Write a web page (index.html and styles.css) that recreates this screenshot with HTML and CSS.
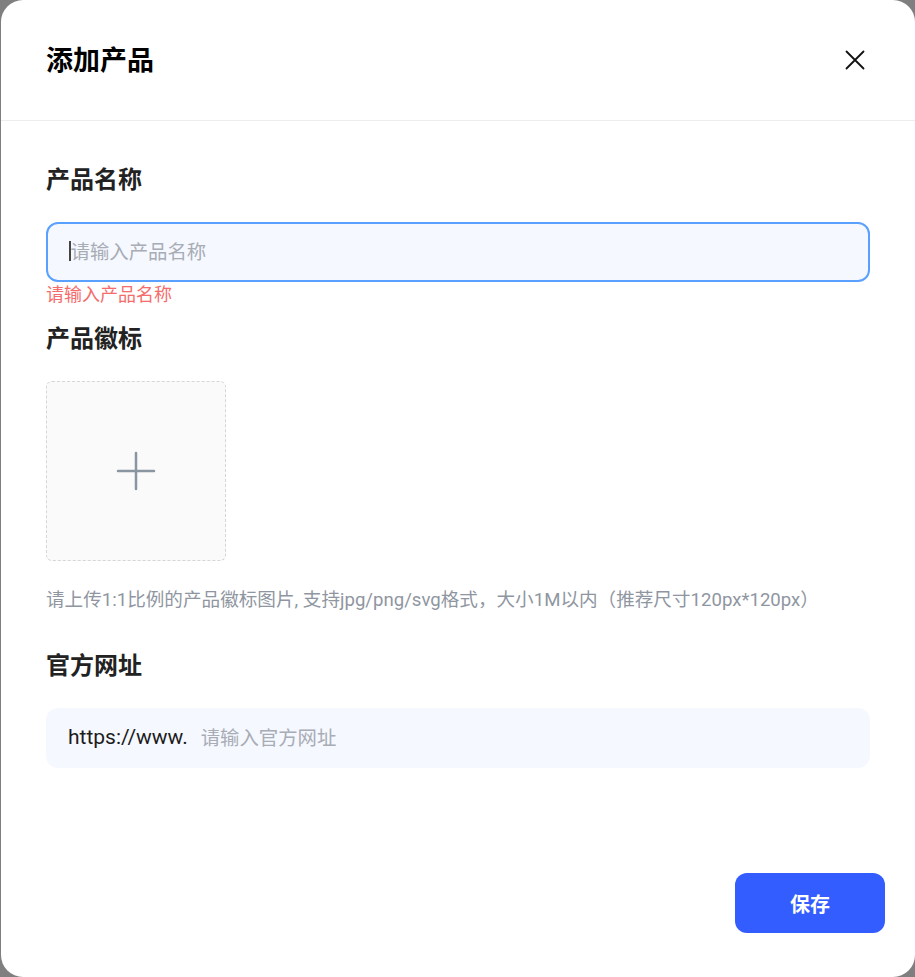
FILE: index.html
```html
<!DOCTYPE html>
<html lang="zh">
<head>
<meta charset="utf-8">
<link rel="stylesheet" href="styles.css">
</head>
<body>
<div class="dialog">
  <div class="header">
    <h1 class="title">添加产品</h1>
    <svg class="close" width="20" height="20" viewBox="0 0 20 20"><path d="M1.5 1.5L18.5 18.5M18.5 1.5L1.5 18.5" stroke="#111" stroke-width="1.8" fill="none" stroke-linecap="round"/></svg>
  </div>
  <div class="content">
    <div class="label first">产品名称</div>
    <div class="field field-focus"><span class="caret"></span><span class="ph">请输入产品名称</span></div>
    <div class="error">请输入产品名称</div>
    <div class="label second">产品徽标</div>
    <div class="upload">
      <svg width="40" height="40" viewBox="0 0 40 40"><path d="M20 2V38M2 20H38" stroke="#8a95a2" stroke-width="2.5" stroke-linecap="round" fill="none"/></svg>
    </div>
    <div class="hint">请上传1:1比例的产品徽标图片, 支持jpg/png/svg格式，大小1M以内（推荐尺寸120px*120px）</div>
    <div class="label third">官方网址</div>
    <div class="field"><span class="prefix">https://www.</span><span class="ph">请输入官方网址</span></div>
  </div>
  <div class="footer">
    <button class="save">保存</button>
  </div>
</div>
</body>
</html>
```
FILE: styles.css
```css
html, body {
  margin: 0;
  padding: 0;
}
body {
  background: #7f7f7f;
  padding-left: 1px;
  font-family: Roboto, "Noto Sans CJK SC", sans-serif;
}
.dialog {
  width: 914px;
  height: 977px;
  background: #fff;
  border-radius: 22px;
  box-sizing: border-box;
}
.header {
  height: 121px;
  box-sizing: border-box;
  border-bottom: 1px solid #ededed;
  display: flex;
  align-items: center;
  justify-content: space-between;
  padding: 0 50px 0 45px;
}
.title {
  margin: 0 0 2px;
  font-family: "Noto Sans CJK SC", sans-serif;
  font-size: 27px;
  font-weight: 700;
  color: #000;
  line-height: 34px;
}
.close {
  display: block;
}
.content {
  padding: 0 45px;
}
.label {
  font-family: "Noto Sans CJK SC", sans-serif;
  font-size: 24px;
  font-weight: 700;
  color: #222;
  line-height: 28px;
}
.label.first { margin-top: 43px; }
.label.second { margin-top: 19px; }
.label.third { margin-top: 39px; }
.field {
  margin-top: 30px;
  height: 60px;
  box-sizing: border-box;
  background: #f5f8ff;
  border-radius: 12px;
  display: flex;
  align-items: center;
  padding: 0 0 3px 21px;
  font-size: 19.4px;
  border: 1.5px solid transparent;
}
.field-focus {
  border: 2px solid #5aa0ff;
  padding-left: 20.5px;
}
.caret {
  display: inline-block;
  width: 2px;
  height: 20px;
  background: #444;
}
.ph {
  color: #a8acb4;
  font-family: "Noto Sans CJK SC", sans-serif;
}
.prefix {
  color: #1c1c1c;
  font-size: 21px;
  margin-right: 13px;
}
.error {
  color: #f56c6c;
  font-size: 18px;
  line-height: 22px;
  font-family: "Noto Sans CJK SC", sans-serif;
}
.upload {
  margin-top: 30px;
  width: 180px;
  height: 180px;
  box-sizing: border-box;
  border: 1px dashed #d6d6d6;
  border-radius: 6px;
  background: #fafafa;
  display: flex;
  align-items: center;
  justify-content: center;
}
.upload svg { display: block; }
.hint {
  margin-top: 28px;
  font-size: 18.6px;
  line-height: 22px;
  color: #8f96a1;
}
.footer {
  margin-top: 105px;
  display: flex;
  justify-content: flex-end;
  padding: 0 30px;
}
.save {
  width: 150px;
  height: 60px;
  border: none;
  border-radius: 12px;
  background: #335dff;
  color: #fff;
  font-family: "Noto Sans CJK SC", sans-serif;
  font-size: 20px;
  font-weight: 700;
  cursor: pointer;
}
```
